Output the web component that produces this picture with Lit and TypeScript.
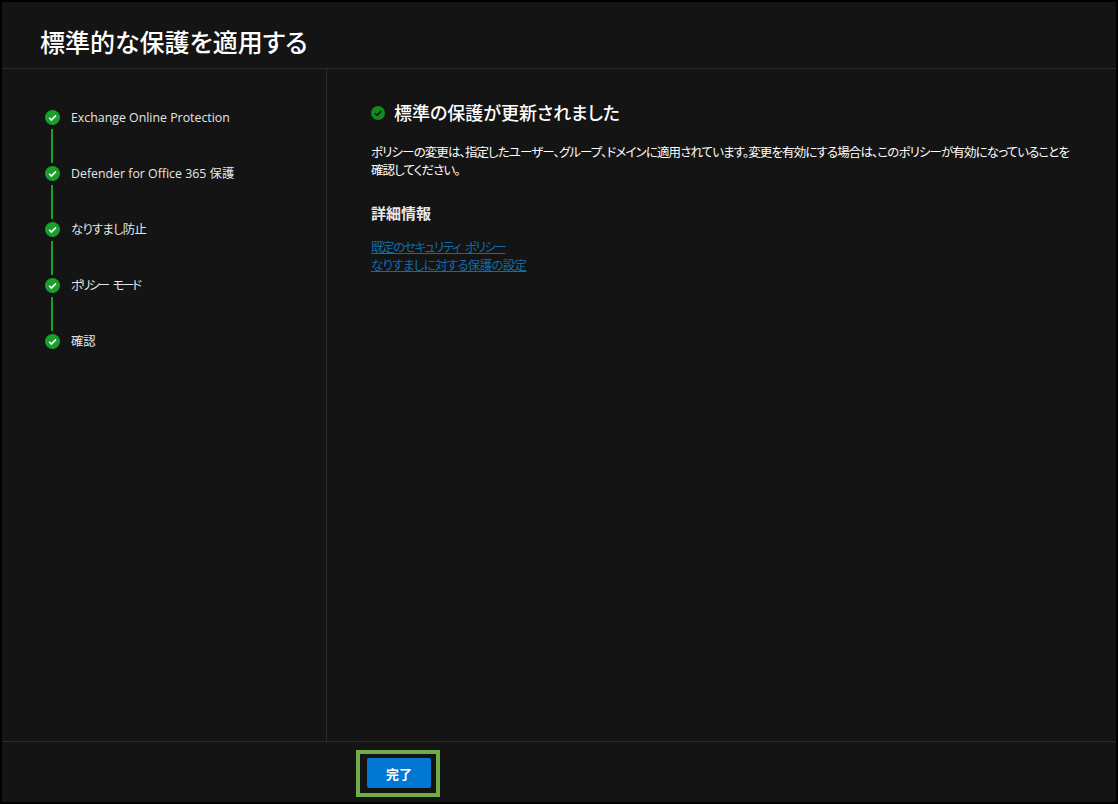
import { LitElement, html, css, svg } from 'lit'
import { customElement } from 'lit/decorators.js'

const steps = [
  { label: 'Exchange Online Protection', tight: 'latin' },
  { label: 'Defender for Office 365 保護', tight: 'latin' },
  { label: 'なりすまし防止', tight: 'kana' },
  { label: 'ポリシー モード', tight: 'kata' },
  { label: '確認', tight: 'latin' },
]

const check = (size: number, fill: string, mark: string) => html`
  <svg class="check" width=${size} height=${size} viewBox="0 0 16 16">
    ${svg`<circle cx="8" cy="8" r="8" fill=${fill}></circle>
    <path d="M4.4 8.3l2.5 2.4 4.8-5" fill="none" stroke=${mark} stroke-width="1.7"></path>`}
  </svg>
`

@customElement('app-root')
export class AppRoot extends LitElement {
  static styles = css`
    :host {
      display: block;
      width: 1118px;
      height: 804px;
      background: #000;
      font-family: 'Open Sans', 'Noto Sans CJK JP', sans-serif;
      font-feature-settings: 'palt';
      color: #f5f5f5;
    }

    .frame {
      box-sizing: border-box;
      height: 804px;
      padding: 2px;
      display: flex;
      flex-direction: column;
    }

    .header {
      height: 67px;
      flex: none;
      box-sizing: border-box;
      padding: 23px 0 0 38px;
      background: #141414;
      border-bottom: 1px solid #2b2b2b;
    }

    h1 {
      margin: 0;
      font-size: 25px;
      line-height: 34px;
      font-weight: 500;
      color: #fff;
    }

    .body {
      flex: 1;
      display: flex;
      min-height: 0;
      background: #141414;
    }

    .side {
      width: 325px;
      flex: none;
      box-sizing: border-box;
      padding: 40px 0 0 43px;
      border-right: 1px solid #2b2b2b;
    }

    .step {
      display: flex;
      align-items: center;
      gap: 11px;
      height: 16px;
      font-size: 12.35px;
      line-height: 16px;
      color: #e6e6e6;
    }

    .step span {
      padding-top: 1px;
    }

    .step .kana {
      letter-spacing: -0.7px;
    }

    .step .kata {
      letter-spacing: -2.2px;
      word-spacing: 4px;
    }

    .check {
      flex: none;
      display: block;
    }

    .rail {
      width: 2px;
      height: 34px;
      margin: 4px 0 2px 6px;
      background: #1a9e2c;
    }

    .main {
      flex: 1;
      box-sizing: border-box;
      padding: 32px 45px 0 44px;
    }

    .title {
      display: flex;
      align-items: center;
      gap: 9px;
      height: 24px;
    }

    h2 {
      margin: 0;
      font-size: 18px;
      line-height: 24px;
      font-weight: 500;
      color: #fff;
    }

    p {
      margin: 19px 0 0;
      font-size: 12.5px;
      line-height: 18px;
      letter-spacing: -0.9px;
      color: #fff;
    }

    h3 {
      margin: 23px 0 0;
      font-size: 15px;
      line-height: 20px;
      font-weight: 700;
      color: #e8e8e8;
    }

    .links {
      margin-top: 16px;
      display: flex;
      flex-direction: column;
      align-items: flex-start;
    }

    a {
      font-size: 12.5px;
      line-height: 18px;
      letter-spacing: -0.7px;
      color: #0e6cab;
      text-decoration: underline;
    }

    a.tight {
      letter-spacing: -1.4px;
      word-spacing: 3px;
    }

    .footer {
      height: 61px;
      flex: none;
      box-sizing: border-box;
      padding: 8px 0 0 354px;
      background: #141414;
      border-top: 1px solid #2b2b2b;
    }

    .mark {
      display: inline-block;
      box-sizing: border-box;
      border: 4px solid #70ad47;
      padding: 4px 5px 5px 7px;
    }

    button {
      display: block;
      width: 64px;
      height: 30px;
      padding: 0;
      border: none;
      border-radius: 2px;
      background: #0078d4;
      color: #fff;
      font: inherit;
      font-size: 13px;
      font-weight: 700;
    }
  `

  render() {
    return html`
      <div class="frame">
        <div class="header"><h1>標準的な保護を適用する</h1></div>
        <div class="body">
          <div class="side">
            ${steps.map(
              (s, i) => html`
                ${i > 0 ? html`<div class="rail"></div>` : ''}
                <div class="step">${check(15, '#1a9e2c', '#fff')}<span class=${s.tight}>${s.label}</span></div>
              `
            )}
          </div>
          <div class="main">
            <div class="title">
              ${check(14, '#128a1e', '#141414')}
              <h2>標準の保護が更新されました</h2>
            </div>
            <p>ポリシーの変更は、指定したユーザー、グループ、ドメインに適用されています。変更を有効にする場合は、このポリシーが有効になっていることを確認してください。</p>
            <h3>詳細情報</h3>
            <div class="links">
              <a class="tight" href="#">既定のセキュリティ ポリシー</a>
              <a href="#">なりすましに対する保護の設定</a>
            </div>
          </div>
        </div>
        <div class="footer">
          <div class="mark"><button>完了</button></div>
        </div>
      </div>
    `
  }
}
